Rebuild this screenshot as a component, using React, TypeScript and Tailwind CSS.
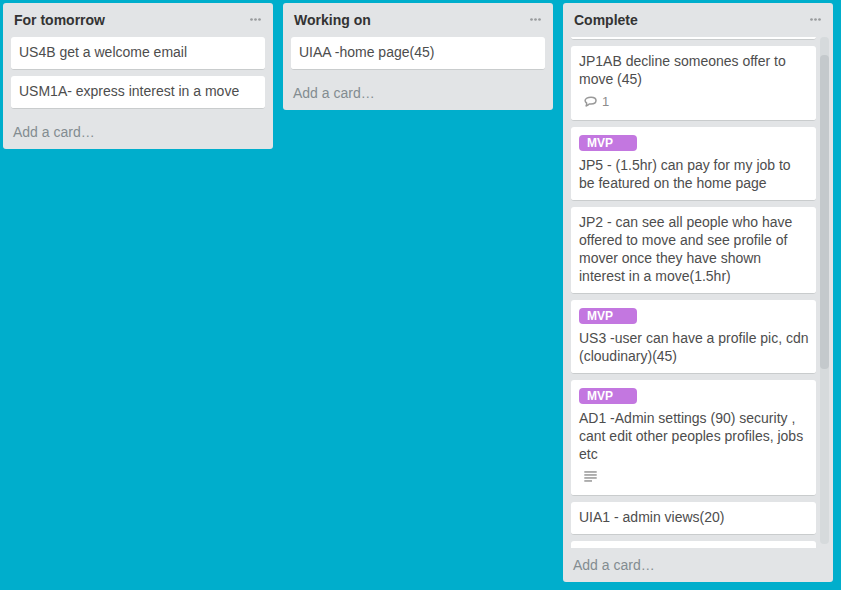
import type { ReactNode } from "react";

type CardData = {
  lines: string[];
  label?: string;
  comments?: number;
  description?: boolean;
};

function MenuDots() {
  return (
    <svg width="11" height="3" viewBox="0 0 11 3" fill="#999b9d" className="mb-px">
      <circle cx="1.5" cy="1.5" r="1.35" />
      <circle cx="5.5" cy="1.5" r="1.35" />
      <circle cx="9.5" cy="1.5" r="1.35" />
    </svg>
  );
}

function CommentIcon() {
  return (
    <svg width="13" height="11" viewBox="0 0 13 11" fill="none" stroke="#999" strokeWidth="1.5" strokeLinejoin="round">
      <path d="M7 1.2C10.1 1.2 12 2.5 12 4.6C12 6.8 10 8.1 7 8.1C6.4 8.1 5.8 8 5.3 7.9C4.5 9 3.6 9.6 2.1 9.9C2.6 9 2.8 8 2.6 7C1.6 6.4 1.1 5.6 1.1 4.6C1.1 2.5 3.9 1.2 7 1.2Z" />
    </svg>
  );
}

function DescriptionIcon() {
  return (
    <svg width="13" height="11" viewBox="0 0 13 11" fill="#a3a3a3">
      <rect x="0.3" y="0.1" width="12.4" height="1.7" />
      <rect x="0.3" y="3.1" width="12.4" height="1.7" />
      <rect x="0.3" y="6.1" width="12.4" height="1.7" />
      <rect x="0.3" y="9.1" width="7.7" height="1.7" />
    </svg>
  );
}

function Card({ lines, label, comments, description }: CardData) {
  return (
    <div className="shrink-0 rounded-[3px] border-b border-[#c9cccd] bg-white px-2 pt-1.5 pb-2">
      {label && (
        <div className="mt-0.5 mb-[5px] h-4 w-[58px] rounded-[4px] bg-[#c377e0] px-2 text-[12px] leading-4 font-bold text-white">
          {label}
        </div>
      )}
      {lines.map((line) => (
        <div key={line} className="h-[18px] leading-[18px] whitespace-nowrap">
          {line}
        </div>
      ))}
      {(comments !== undefined || description) && (
        <div className="mt-[3px] mb-px flex h-5 items-center gap-[5px] pl-[5px] text-[13px] text-[#8c8c8c]">
          {comments !== undefined && (
            <>
              <CommentIcon />
              <span className="pt-0.5 leading-5">{comments}</span>
            </>
          )}
          {description && <DescriptionIcon />}
        </div>
      )}
    </div>
  );
}

function List({ title, children }: { title: string; children: ReactNode }) {
  return (
    <section className="flex w-[270px] shrink-0 flex-col rounded-[3px] bg-[#e2e4e6]">
      <header className="flex h-[34px] items-center justify-between pr-3 pl-[11px] text-[14px] font-bold text-[#333]">
        <h2>{title}</h2>
        <MenuDots />
      </header>
      {children}
      <footer className="h-[34px] px-2.5 pt-2 leading-[18px] text-[#838c91]">Add a card…</footer>
    </section>
  );
}

const completed: CardData[] = [
  { lines: ["JP1AB decline someones offer to", "move (45)"], comments: 1 },
  { label: "MVP", lines: ["JP5 - (1.5hr) can pay for my job to", "be featured on the home page"] },
  {
    lines: [
      "JP2 - can see all people who have",
      "offered to move and see profile of",
      "mover once they have shown",
      "interest in a move(1.5hr)",
    ],
  },
  { label: "MVP", lines: ["US3 -user can have a profile pic, cdn", "(cloudinary)(45)"] },
  {
    label: "MVP",
    lines: ["AD1 -Admin settings (90) security ,", "cant edit other peoples profiles, jobs", "etc"],
    description: true,
  },
  { lines: ["UIA1 - admin views(20)"] },
];

export default function App() {
  return (
    <main className="flex h-[590px] w-[841px] items-start gap-2.5 overflow-hidden bg-[#00aecc] p-[3px] font-['Liberation_Sans',Arial,sans-serif] text-[14px] text-[#4d4d4d]">
      <List title="For tomorrow">
        <div className="mb-1.5 flex flex-col gap-1.5 px-2">
          <Card lines={["US4B get a welcome email"]} />
          <Card lines={["USM1A- express interest in a move"]} />
        </div>
      </List>
      <List title="Working on">
        <div className="mb-1.5 flex flex-col px-2">
          <Card lines={["UIAA -home page(45)"]} />
        </div>
      </List>
      <List title="Complete">
        <div className="flex h-[511px] gap-1 pr-1 pl-2">
          <div className="flex w-[245px] flex-col gap-1.5 overflow-hidden">
            <div className="h-[3px] shrink-0 overflow-hidden">
              <div className="mt-[-5px] h-2 rounded-[3px] border-b border-[#c9cccd] bg-white" />
            </div>
            {completed.map((card) => (
              <Card key={card.lines[0]} {...card} />
            ))}
            <div className="h-8 shrink-0 rounded-[3px] bg-white" />
          </div>
          <div className="h-[507px] w-[9px] rounded-[4px] bg-[#d6dadc] pt-[18px]">
            <div className="h-[314px] rounded-[4px] bg-[#c4c9cc]" />
          </div>
        </div>
      </List>
    </main>
  );
}
